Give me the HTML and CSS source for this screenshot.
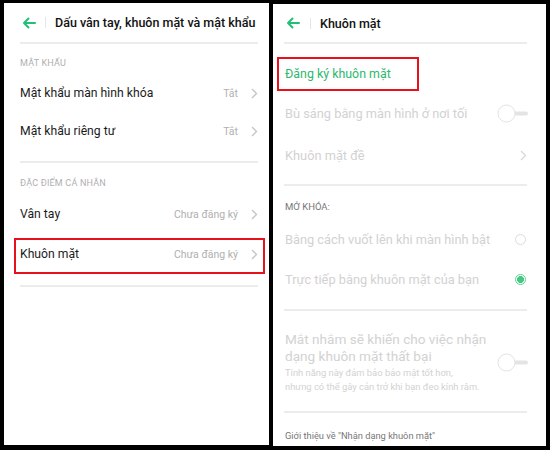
FILE: index.html
```html
<!DOCTYPE html>
<html lang="vi">
<head>
  <meta charset="UTF-8" />
  <meta name="viewport" content="width=device-width, initial-scale=1.0" />
  <title>Khuôn mặt</title>
  <link rel="stylesheet" href="styles.css">
</head>
<body>
  <div class="screens">
    <!-- left screen: settings list -->
    <section class="screen screen-left">
      <header class="topbar">
        <svg class="back" width="14" height="12" viewBox="0 0 14 12"><path d="M13 6H2M6.5 1.5L2 6l4.5 4.5" fill="none" stroke="#22c076" stroke-width="2" stroke-linecap="round" stroke-linejoin="round"/></svg>
        <span class="sep"></span>
        <h1>Dấu vân tay, khuôn mặt và mật khẩu</h1>
      </header>

      <div class="label">MẬT KHẨU</div>
      <div class="row">
        <span class="name">Mật khẩu màn hình khóa</span>
        <span class="value">Tắt</span>
        <svg class="chev" width="7" height="11" viewBox="0 0 7 11"><path d="M1 1l4.5 4.5L1 10" fill="none" stroke="#c4c4c4" stroke-width="1.3"/></svg>
      </div>
      <div class="row">
        <span class="name">Mật khẩu riêng tư</span>
        <span class="value">Tắt</span>
        <svg class="chev" width="7" height="11" viewBox="0 0 7 11"><path d="M1 1l4.5 4.5L1 10" fill="none" stroke="#c4c4c4" stroke-width="1.3"/></svg>
      </div>
      <hr class="divider">

      <div class="label second">ĐẶC ĐIỂM CÁ NHÂN</div>
      <div class="row tall">
        <span class="name">Vân tay</span>
        <span class="value">Chưa đăng ký</span>
        <svg class="chev" width="7" height="11" viewBox="0 0 7 11"><path d="M1 1l4.5 4.5L1 10" fill="none" stroke="#c4c4c4" stroke-width="1.3"/></svg>
      </div>
      <div class="row tall marked">
        <span class="name">Khuôn mặt</span>
        <span class="value">Chưa đăng ký</span>
        <svg class="chev" width="7" height="11" viewBox="0 0 7 11"><path d="M1 1l4.5 4.5L1 10" fill="none" stroke="#c4c4c4" stroke-width="1.3"/></svg>
      </div>
      <hr class="divider">
    </section>

    <!-- right screen: face unlock -->
    <section class="screen screen-right">
      <header class="topbar">
        <svg class="back" width="14" height="12" viewBox="0 0 14 12"><path d="M13 6H2M6.5 1.5L2 6l4.5 4.5" fill="none" stroke="#22c076" stroke-width="2" stroke-linecap="round" stroke-linejoin="round"/></svg>
        <span class="sep"></span>
        <h1>Khuôn mặt</h1>
      </header>

      <div class="row marked-wide">
        <span class="name green">Đăng ký khuôn mặt</span>
      </div>
      <div class="row taller">
        <span class="name off">Bù sáng bằng màn hình ở nơi tối</span>
        <svg class="switch" width="31" height="19" viewBox="0 0 31 19"><rect x="17" y="7.5" width="14" height="4" rx="2" fill="#e4e4e4"/><circle cx="9.5" cy="9.5" r="8.5" fill="#fff" stroke="#e2e2e2"/></svg>
      </div>
      <div class="row taller">
        <span class="name off">Khuôn mặt đề</span>
        <svg class="chev" width="7" height="11" viewBox="0 0 7 11"><path d="M1 1l4.5 4.5L1 10" fill="none" stroke="#d8d8d8" stroke-width="1.3"/></svg>
      </div>
      <hr class="divider">

      <div class="label dark">MỞ KHÓA:</div>
      <div class="row tall">
        <span class="name off">Bằng cách vuốt lên khi màn hình bật</span>
        <span class="radio"></span>
      </div>
      <div class="row tall">
        <span class="name off">Trực tiếp bằng khuôn mặt của bạn</span>
        <span class="radio checked"></span>
      </div>
      <hr class="divider">

      <div class="row block">
        <div class="text">
          <div class="big off">Mắt nhắm sẽ khiến cho việc nhận<br>dạng khuôn mặt thất bại</div>
          <div class="hint">Tính năng này đảm bảo bảo mật tốt hơn,<br>nhưng có thể gây cản trở khi bạn đeo kính râm.</div>
        </div>
        <svg class="switch" width="31" height="19" viewBox="0 0 31 19"><rect x="17" y="7.5" width="14" height="4" rx="2" fill="#e4e4e4"/><circle cx="9.5" cy="9.5" r="8.5" fill="#fff" stroke="#e2e2e2"/></svg>
      </div>
      <hr class="divider">

      <div class="about">Giới thiệu về "Nhận dạng khuôn mặt"</div>
    </section>
  </div>
</body>
</html>
```

FILE: styles.css
```css
:root {
  --green: #22c076;
  --text: #1c1c1c;
  --muted: #b0b0b0;
  --disabled: #d2d2d2;
  --line: #ececec;
  --mark: #e8101c;
}

html, body {
  margin: 0;
  height: 100%;
  background: #000;
  font-family: Roboto, "Liberation Sans", sans-serif;
  color: var(--text);
}

.screens {
  display: flex;
  gap: 4px;
  height: 450px;
  padding: 3px 4px 4px 4px;
  box-sizing: border-box;
}

.screen {
  background: #fff;
  overflow: hidden;
}

.screen-left {
  width: 265px;
  height: 442px;
  padding: 0 11px 0 16px;
  box-sizing: border-box;
}

.screen-right {
  width: 273px;
  height: 442px;
  margin-top: 1px;
  padding: 0 19px 0 11px;
  box-sizing: border-box;
}

.topbar {
  display: flex;
  align-items: center;
  height: 39px;
  border-bottom: 2px solid var(--line);
}

.screen-left .topbar { padding-left: 2px; }
.screen-right .topbar { padding-left: 2px; height: 38px; }

.topbar .back {
  flex: none;
}

.topbar .sep {
  width: 1px;
  height: 11px;
  background: #e6e6e6;
  margin: 0 9px 0 9px;
}

.screen-right .topbar .sep { margin-left: 10px; }

.topbar h1 {
  margin: 0;
  font-size: 12.5px;
  font-weight: 500;
  color: #111;
  white-space: nowrap;
}

.label {
  font-size: 9px;
  color: var(--muted);
  line-height: 14px;
  padding: 12px 0 4px;
  letter-spacing: 0.2px;
}

.label.second { padding-top: 13px; }

.label.dark {
  color: #777;
  font-size: 9.5px;
  padding: 14px 0 5px 1px;
  letter-spacing: 0;
}

.row {
  position: relative;
  display: flex;
  align-items: center;
  height: 38px;
  font-size: 12.2px;
}

.row.tall { height: 40px; }
.row.taller { height: 42px; }

.screen-right .row {
  padding-left: 1px;
  font-size: 12.8px;
}

.row .name {
  flex: 1;
  white-space: nowrap;
}

.row .value {
  font-size: 10.5px;
  color: var(--muted);
  margin-right: 13px;
}

.row .chev {
  flex: none;
}

.name.green {
  color: #2cb86d;
  font-size: 12.4px;
}

.off {
  color: var(--disabled);
}

.row .switch {
  flex: none;
  margin-right: -1px;
}

.radio {
  width: 9px;
  height: 9px;
  border: 1px solid #dcdcdc;
  border-radius: 50%;
  margin-right: 1px;
  box-sizing: content-box;
}

.radio.checked {
  border-color: #5fd095;
  background: radial-gradient(circle, #45c982 0 3.2px, #fff 3.8px);
}

.divider {
  border: none;
  border-top: 2px solid var(--line);
  margin: 11px 0 0;
}

.screen-right .divider { margin-top: 8px; }
.screen-right .row.tall + .divider { margin-top: 10px; }

/* red annotation frames drawn over the rows */
.marked::after,
.marked-wide::after {
  content: "";
  position: absolute;
  border: 2px solid var(--mark);
  pointer-events: none;
}

.marked::after {
  top: 4px;
  bottom: 0;
  left: -6px;
  right: -7px;
}

.marked-wide {
  margin-top: 10px;
}

.marked-wide::after {
  top: 3px;
  bottom: 1px;
  left: -7px;
  right: 108px;
}

.row.block {
  height: auto;
  padding: 20px 0 17px 1px;
  align-items: center;
}

.screen-right .row.block + .divider { margin-top: 0; }

.row.block .text {
  flex: 1;
}

.big {
  font-size: 13.6px;
  line-height: 17px;
  white-space: nowrap;
}

.hint {
  font-size: 9.4px;
  line-height: 14px;
  color: var(--disabled);
  margin-top: 1px;
  white-space: nowrap;
}

.about {
  font-size: 9.3px;
  line-height: 12px;
  color: #777;
  padding: 17px 0 0 1px;
}
```
